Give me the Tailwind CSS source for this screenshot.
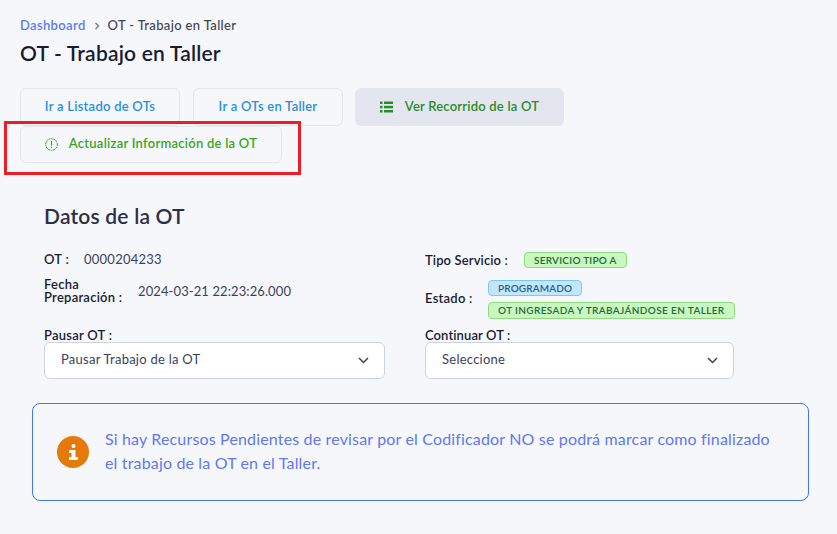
<!DOCTYPE html>
<html>
<head>
<meta charset="utf-8">
<title>OT - Trabajo en Taller</title>
<script src="https://cdn.jsdelivr.net/npm/@tailwindcss/browser@4"></script>
</head>
<body class="bg-[#f6f7fb] font-['Lato','Noto_Sans',sans-serif] text-[#3b3f5c] tracking-[0.25px]">
<div class="relative w-[837px] h-[534px] overflow-hidden">
	<div class="pt-[17px] pl-5">
		<div class="flex items-center h-[17px] text-[13px] font-medium">
			<a class="text-[#5b7cf5] font-semibold tracking-[0.35px]">Dashboard</a>
			<svg class="w-[8px] h-[8px] mx-[7px] text-[#7e8299]" viewBox="0 0 8 8" fill="none" stroke="currentColor" stroke-width="1.5"><path d="M2.5 1l3 3-3 3"/></svg>
			<span class="text-[#3f4254] tracking-[0.35px]">OT - Trabajo en Taller</span>
		</div>
		<h1 class="mt-[5px] text-[21px] leading-[28px] font-semibold text-[#181c32] tracking-[0.2px]">OT - Trabajo en Taller</h1>
	</div>

	<div class="pl-5 mt-[21px] flex flex-wrap w-[600px]">
		<button class="w-[160px] h-[38px] pb-[1px] mr-[13px] rounded-md border border-[#e4e6ef] text-[13px] font-semibold text-[#2a8fd8]">Ir a Listado de OTs</button>
		<button class="w-[150px] h-[38px] pb-[1px] mr-[12px] rounded-md border border-[#e4e6ef] text-[13px] font-semibold text-[#2a8fd8]">Ir a OTs en Taller</button>
		<button class="w-[209px] h-[38px] pb-[1px] rounded-md bg-[#e3e6ee] text-[13px] font-semibold text-[#2b8a2b] tracking-[0.2px] flex items-center justify-center gap-[12px]">
			<svg class="w-[13px] h-[12px]" viewBox="0 0 13 12" fill="currentColor"><rect x="0" y="0.5" width="2.5" height="2.5"/><rect x="4" y="0.5" width="9" height="2.5"/><rect x="0" y="4.8" width="2.5" height="2.5"/><rect x="4" y="4.8" width="9" height="2.5"/><rect x="0" y="9" width="2.5" height="2.5"/><rect x="4" y="9" width="9" height="2.5"/></svg>
			Ver Recorrido de la OT
		</button>
		<button class="w-[262px] h-[37px] pb-[1px] rounded-md border border-[#e4e6ef] text-[13px] font-semibold text-[#3aa51c] flex items-center justify-center gap-[11px]">
			<svg class="w-[13px] h-[13px]" viewBox="0 0 13 13" fill="none" stroke="currentColor"><circle cx="6.5" cy="6.5" r="5.8" stroke-width="1" stroke-dasharray="2 0.6"/><path d="M6.5 3v4.5M6.5 8.8v1.3" stroke-width="1.2"/></svg>
			Actualizar Información de la OT
		</button>
	</div>

	<div class="pl-[44px] mt-[40px]">
		<h2 class="text-[21px] leading-[26px] font-semibold text-[#2b2f45] tracking-[0.2px]">Datos de la OT</h2>
		<div class="mt-[23px] flex">
			<div class="w-[381px]">
				<div class="flex items-center h-[16px] text-[13px]">
					<span class="w-[40px] font-semibold text-[#181c32]">OT :</span>
					<span>0000204233</span>
				</div>
				<div class="mt-[9px] flex items-center h-[28px] text-[13px]">
					<span class="w-[94px] font-semibold leading-[13px] text-[#181c32]">Fecha<br>Preparación :</span>
					<span class="tracking-[0.1px] pt-[1px]">2024-03-21 22:23:26.000</span>
				</div>
				<div class="mt-[23px] text-[13px] leading-[14px] font-semibold text-[#181c32]">Pausar OT :</div>
				<div class="w-[341px] h-[37px] pb-[1px] bg-white rounded-md border border-[#cdd2e0] flex items-center justify-between pl-4 pr-[15px] text-[13px]">
					Pausar Trabajo de la OT
					<svg class="w-[11px] h-[7px] text-[#3f4254]" viewBox="0 0 11 7" fill="none" stroke="currentColor" stroke-width="1.5"><path d="M1 1l4.5 4.5L10 1"/></svg>
				</div>
			</div>
			<div class="w-[340px]">
				<div class="flex items-center h-[16px] text-[13px]">
					<span class="w-[99px] pt-[1px] font-semibold text-[#181c32] tracking-[0.12px]">Tipo Servicio :</span>
					<span class="h-[16px] px-[9px] rounded-[4px] border border-[#8fdc7f] bg-[#c9f7c0] text-[#1f6b3a] text-[10px] leading-[14px] font-semibold">SERVICIO TIPO A</span>
				</div>
				<div class="mt-[11px] flex items-center h-[40px] text-[13px]">
					<span class="w-[63px] font-semibold text-[#181c32]">Estado :</span>
					<div class="flex flex-col gap-[6px] items-start">
						<span class="h-[16px] px-[9px] rounded-[4px] border border-[#7cc8f5] bg-[#c2e7fd] text-[#1f5f8a] text-[10px] leading-[14px] font-semibold tracking-[0.15px]">PROGRAMADO</span>
						<span class="h-[17px] px-[9px] rounded-[4px] border border-[#8fdc7f] bg-[#c9f7c0] text-[#1f6b3a] text-[10px] leading-[15px] font-semibold tracking-[0.37px]">OT INGRESADA Y TRABAJÁNDOSE EN TALLER</span>
					</div>
				</div>
				<div class="mt-[9px] text-[13px] leading-[14px] font-semibold text-[#181c32] tracking-[0.1px]">Continuar OT :</div>
				<div class="w-[309px] h-[37px] pb-[1px] bg-white rounded-md border border-[#cdd2e0] flex items-center justify-between pl-4 pr-[15px] text-[13px]">
					Seleccione
					<svg class="w-[11px] h-[7px] text-[#3f4254]" viewBox="0 0 11 7" fill="none" stroke="currentColor" stroke-width="1.5"><path d="M1 1l4.5 4.5L10 1"/></svg>
				</div>
			</div>
		</div>
	</div>

	<div class="ml-8 mt-[24px] w-[777px] h-[98px] rounded-lg border border-[#3f78f0] flex items-center pl-[24px] pr-[30px] gap-[16px]">
		<span class="w-8 h-8 shrink-0 rounded-full bg-[#e57a0a] flex items-center justify-center">
			<svg class="w-[11px] h-[16px]" viewBox="0 0 11 16" fill="white"><circle cx="5.5" cy="2" r="2"/><path d="M1.5 6h6v7h2.5v3h-9v-3h2.5v-4h-2.5z"/></svg>
		</span>
		<p class="pb-[2px] text-[16px] leading-[24px] text-[#5f78f5] tracking-[0.16px]">Si hay Recursos Pendientes de revisar por el Codificador NO se podrá marcar como finalizado el trabajo de la OT en el Taller.</p>
	</div>

	<div class="absolute left-[4px] top-[121px] w-[297px] h-[54px] border-[3px] border-[#ee1c25]"></div>
</div>
</body>
</html>
